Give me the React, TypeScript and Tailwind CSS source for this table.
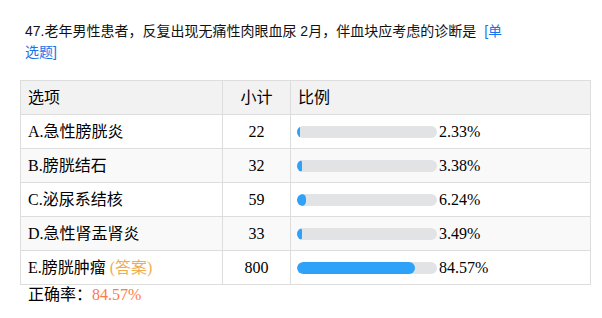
const rows = [
  { label: "A.急性膀胱炎", count: 22, pct: 2.33 },
  { label: "B.膀胱结石", count: 32, pct: 3.38 },
  { label: "C.泌尿系结核", count: 59, pct: 6.24 },
  { label: "D.急性肾盂肾炎", count: 33, pct: 3.49 },
  { label: "E.膀胱肿瘤", count: 800, pct: 84.57, answer: true },
];

const serif = "font-['Liberation_Serif','Noto_Sans_CJK_SC',serif]";

export default function App() {
  return (
    <div className="w-[602px] h-[318px] bg-white overflow-hidden">
      <div className="pt-[21px] pl-[25px] text-[14px] leading-[21px] text-[#111] font-['Liberation_Sans','Noto_Sans_CJK_SC',sans-serif]">
        47.老年男性患者，反复出现无痛性肉眼血尿 2月，伴血块应考虑的诊断是
        <span className="ml-[8px] text-[#1a73e8]">
          [单
          <br />
          选题]
        </span>
      </div>

      <table
        className={`mt-[17px] ml-[20px] w-[570px] table-fixed border-collapse text-[16px] text-black ${serif}`}
      >
        <colgroup>
          <col className="w-[202px]" />
          <col className="w-[68px]" />
          <col className="w-[300px]" />
        </colgroup>
        <thead>
          <tr className="h-[34px] bg-[#f2f2f2]">
            <th className="border border-[#dddddd] px-[7px] text-left font-normal">选项</th>
            <th className="border border-[#dddddd] text-center font-normal">小计</th>
            <th className="border border-[#dddddd] px-[7px] text-left font-normal">比例</th>
          </tr>
        </thead>
        <tbody>
          {rows.map((r, i) => (
            <tr key={r.label} className={`h-[34px] ${i % 2 === 1 ? "bg-[#f9f9f9]" : "bg-white"}`}>
              <td className="border border-[#dddddd] px-[7px]">
                {r.label}
                {r.answer && <span className="ml-[4px] text-[#f0ad4e]">(答案)</span>}
              </td>
              <td className="border border-[#dddddd] text-center">{r.count}</td>
              <td className="border border-[#dddddd] px-[6px]">
                <div className="flex items-center">
                  <div className="h-[12px] w-[140px] rounded-full bg-[#e2e3e5] overflow-hidden">
                    <div
                      className="h-full rounded-full bg-[#2ea1f8]"
                      style={{ width: `${Math.max(r.pct, 2.3)}%` }}
                    />
                  </div>
                  <span className="ml-[2px]">{r.pct.toFixed(2)}%</span>
                </div>
              </td>
            </tr>
          ))}
        </tbody>
      </table>

      <div className={`pl-[28px] text-[16px] leading-[19px] text-black ${serif}`}>
        正确率：<span className="text-[#ff7a45]">84.57%</span>
      </div>
    </div>
  );
}
